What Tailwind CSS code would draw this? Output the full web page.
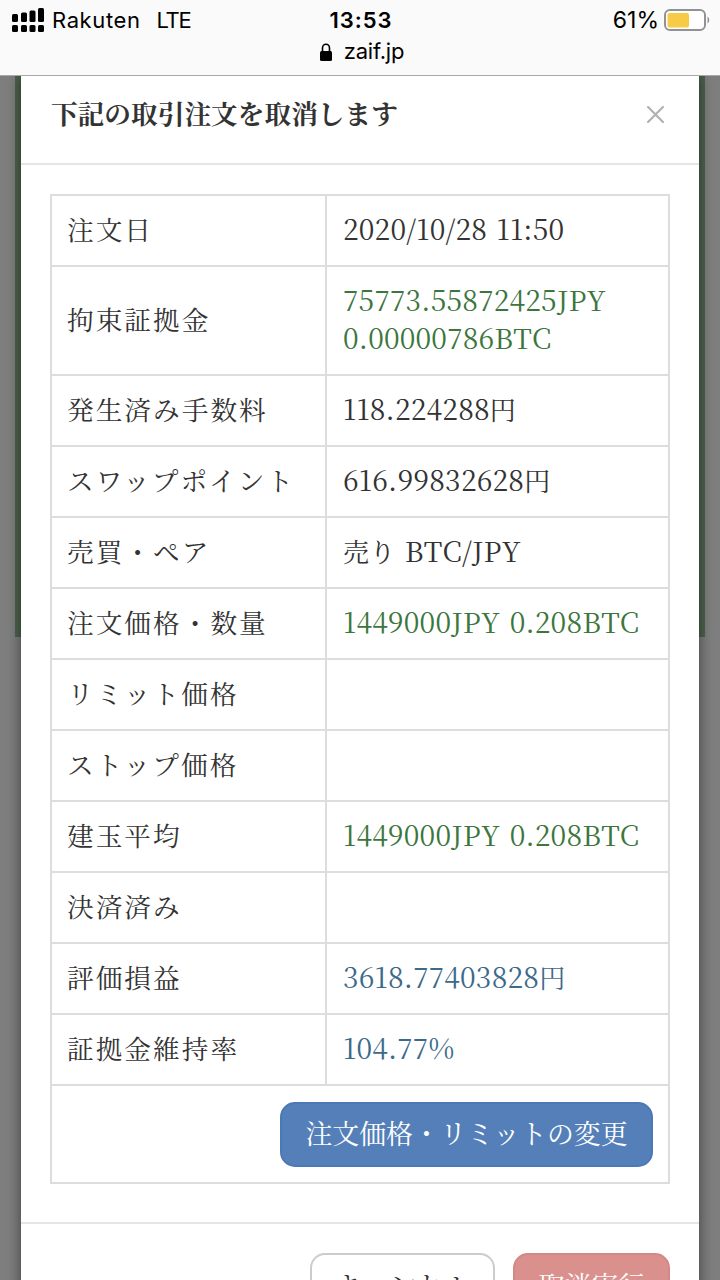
<!DOCTYPE html>
<html lang="ja">
<head>
    <meta charset="utf-8">
    <title>zaif.jp</title>
    <meta name="viewport" content="width=device-width, initial-scale=1.0">
    <script src="https://cdn.jsdelivr.net/npm/@tailwindcss/browser@4"></script>
</head>
<body class="w-[720px] h-[1280px] overflow-hidden flex flex-col bg-[#7e7e7e] text-[#333] font-['Noto_Serif_CJK_JP','Liberation_Serif','Noto_Sans_CJK_JP',serif]">
    <!-- Status bar -->
    <header class="relative z-10 h-[76px] shrink-0 bg-[#fafafa] border-b border-[#a8a8a8] text-black font-[Inter,sans-serif]">
        <div class="grid grid-cols-3 h-10 items-center text-[22px] leading-10">
            <div class="flex items-center pl-3">
                <svg class="w-8 h-6 mr-2" viewBox="0 0 32 24">
                    <rect x="0" y="6" width="6" height="8" rx="1.500"/>
                    <rect x="9" y="4.500" width="6" height="9.500" rx="1.500"/>
                    <rect x="17.500" y="2.500" width="6" height="11.500" rx="1.500"/>
                    <rect x="26" y="0" width="6" height="14" rx="1.500"/>
                    <rect x="0" y="17" width="6" height="7" rx="1.500"/>
                    <rect x="9" y="17" width="6" height="7" rx="1.500"/>
                    <rect x="17.500" y="17" width="6" height="7" rx="1.500"/>
                    <rect x="26" y="17" width="6" height="7" rx="1.500"/>
                </svg>
                <span class="tracking-[0.6px]">Rakuten</span>
                <span class="ml-4 tracking-[-1.3px]">LTE</span>
            </div>
            <div class="text-center font-semibold tracking-[1px] pl-0.5">13:53</div>
            <div class="flex items-center justify-end pr-[10px]">
                <span class="mr-[5px] text-[23px] tracking-[0px]">61%</span>
                <svg class="w-[46px] h-[22px]" viewBox="0 0 46 22" fill="none">
                    <rect x="1" y="1" width="40" height="20" rx="5" fill="#fff" stroke="#929292" stroke-width="2"/>
                    <rect x="3.500" y="4" width="21.500" height="14.500" rx="2" fill="#f7cb46"/>
                    <path d="M43.500 7.500c2.300 1.500 2.300 5.500 0 7z" fill="#929292"/>
                </svg>
            </div>
        </div>
        <div class="flex justify-center items-center h-6 pl-1 text-[22px] leading-6">
            <svg class="w-3 h-[18px] mr-3" viewBox="0 0 12 18">
                <path d="M2.500 9V5a3.500 3.700 0 0 1 7 0v4" fill="none" stroke="#000" stroke-width="1.600"/>
                <rect x="0" y="8" width="12" height="10" rx="1.500"/>
            </svg>
            <span class="tracking-[-0.2px] pb-0.5">zaif.jp</span>
        </div>
    </header>

    <!-- Dimmed page with the dialog over it -->
    <main class="relative h-[1204px] px-[21px]">
        <div class="absolute left-[15px] top-0 w-[690px] h-[561px] bg-[#4e634e]"></div>
        <section class="relative h-[1240px] bg-white shadow-[0_0_12px_1px_rgba(0,0,0,0.45)]">
            <div class="flex items-center justify-between h-[89px] pb-2.5 pl-[30px] pr-[35px] border-b-2 border-[#e5e5e5]">
                <h1 class="pb-[3px] text-[26.7px] leading-10 font-bold">下記の取引注文を取消します</h1>
                <svg class="w-[17px] h-[17px]" viewBox="0 0 16 16" fill="none" stroke="#b0b0b0" stroke-width="2" stroke-linecap="round">
                    <path d="M1 1l14 14M15 1L1 15"/>
                </svg>
            </div>

            <div class="h-[1059px] px-[29px] pt-[29px] border-b-2 border-[#e5e5e5]">
                <table class="w-[620px] table-fixed border-collapse text-[26.7px] leading-[38px] [&_td]:border-2 [&_td]:border-[#ddd]">
                    <colgroup><col class="w-[275px]"><col></colgroup>
                    <tbody id="rows"></tbody>
                    <tfoot>
                        <tr class="h-[98px]">
                            <td colspan="2" class="p-0 pr-[15px]">
                                <button class="block ml-auto w-[373px] h-[65px] pb-[3px] rounded-[15px] bg-[#557fb9] border-2 border-[#4c78b5] text-white text-[26.9px] whitespace-nowrap">注文価格・リミットの変更</button>
                            </td>
                        </tr>
                    </tfoot>
                </table>
            </div>

            <div class="flex justify-end gap-[18px] pt-[29px] pr-[29px] text-[26.7px] leading-[38px] whitespace-nowrap">
                <button class="w-[185px] h-[65px] pb-[3px] rounded-[15px] border-2 border-[#ccc] bg-white">キャンセル</button>
                <button class="w-[157px] h-[65px] pb-[3px] rounded-[15px] border-2 border-[#d48885] bg-[#da918e] text-white">取消実行</button>
            </div>
        </section>
    </main>

    <script>
        const rows = [
            ['注文日', '2020/10/28 11:50'],
            ['拘束証拠金', '75773.55872425JPY<br>0.00000786BTC', 'text-[#3c763d]'],
            ['発生済み手数料', '118.224288<span class="text-[26px]">円</span>'],
            ['スワップポイント', '616.99832628<span class="text-[26px]">円</span>'],
            ['売買・ペア', '<span class="text-[26px]">売り</span> BTC/JPY'],
            ['注文価格・数量', '1449000JPY 0.208BTC', 'text-[#3c763d]'],
            ['リミット価格', ''],
            ['ストップ価格', ''],
            ['建玉平均', '1449000JPY 0.208BTC', 'text-[#3c763d]'],
            ['決済済み', ''],
            ['評価損益', '3618.77403828<span class="text-[26px]">円</span>', 'text-[#3b6a8a]'],
            ['証拠金維持率', '104.77%', 'text-[#3b6a8a]'],
        ];
        document.getElementById('rows').innerHTML = rows.map(([label, value, color = '']) => `
            <tr class="${value.includes('<br>') ? 'h-[109px]' : 'h-[71px]'}">
                <td class="p-0 pb-1 pl-[15px] tracking-[2px]">${label}</td>
                <td class="p-0 pb-[5px] pl-4 text-[28px] tracking-[0.2px] [word-spacing:2px] tabular-nums [font-kerning:none] whitespace-nowrap ${color}">${value}</td>
            </tr>`).join('');
    </script>
</body>
</html>
